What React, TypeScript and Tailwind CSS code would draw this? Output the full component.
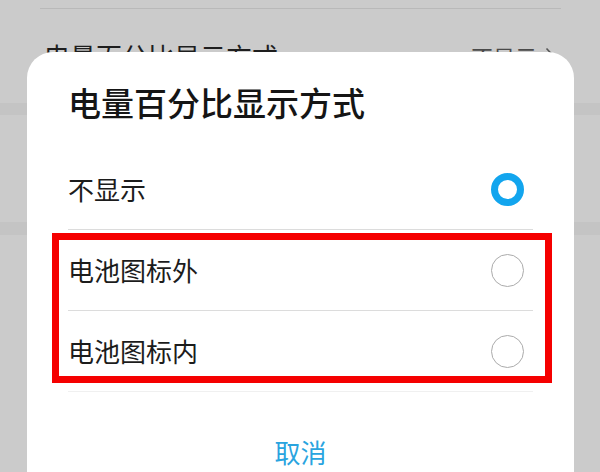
import React from "react";

const FONT = "font-['Noto_Sans_CJK_SC','Noto_Sans',sans-serif]";

function Radio({ checked }: { checked?: boolean }) {
  if (checked) {
    return (
      <div className="w-[33px] h-[33px] rounded-full border-[7px] border-[#12a5ee] bg-white" />
    );
  }
  return <div className="w-[33px] h-[33px] rounded-full border-[1.5px] border-[#ababab] bg-white" />;
}

const options = [
  { label: "不显示", checked: true },
  { label: "电池图标外", checked: false },
  { label: "电池图标内", checked: false },
];

export default function App() {
  return (
    <div className={`relative w-[600px] h-[472px] overflow-hidden bg-[#cbcbcb] ${FONT}`}>
      {/* dimmed settings page behind the dialog */}
      <div className="flex flex-col">
        <div className="h-[8px]" />
        <div className="ml-[40px] w-[521px] h-px bg-[#b9b9b9]" />
        <div className="h-[94px] flex items-center justify-between pl-[44px] pr-[45px]">
          <span className="text-[26px] text-[#1e1e1e] leading-none">电量百分比显示方式</span>
          <span className="flex items-center gap-[8px] text-[22px] text-[#4a4a4a] leading-none">
            不显示
            <svg width="10" height="18" viewBox="0 0 10 18" fill="none">
              <path d="M1.5 1.5 L8.5 9 L1.5 16.5" stroke="#555" strokeWidth="1.6" />
            </svg>
          </span>
        </div>
        <div className="h-[12px] bg-[#c4c4c4]" />
        <div className="h-[107px]" />
        <div className="h-[13px] bg-[#c4c4c4]" />
      </div>

      {/* dialog */}
      <div className="absolute left-[27px] top-[52px] w-[547px] h-[460px] rounded-[26px] bg-white flex flex-col">
        <div className="pl-[41px] pt-[30px] h-[97px] text-[33px] leading-[40px] text-[#151515] font-medium">
          电量百分比显示方式
        </div>
        <div className="mx-[41px] flex flex-col">
          {options.map((o, i) => (
            <div
              key={o.label}
              className={`h-[81px] flex items-center justify-between pr-[9px] ${
                i < options.length - 1 ? "border-b border-[#dcdcdc]" : "border-b border-[#f0f0f0]"
              }`}
            >
              <span className="text-[26px] text-[#1c1c1c] leading-none">{o.label}</span>
              <Radio checked={o.checked} />
            </div>
          ))}
        </div>
        <div className="mt-[42px] text-center text-[26px] leading-[36px] text-[#2aa4df]">取消</div>
      </div>

      {/* red annotation box */}
      <div className="absolute left-[52px] top-[233px] w-[500px] h-[150px] border-[7px] border-[#f50000]" />
    </div>
  );
}
